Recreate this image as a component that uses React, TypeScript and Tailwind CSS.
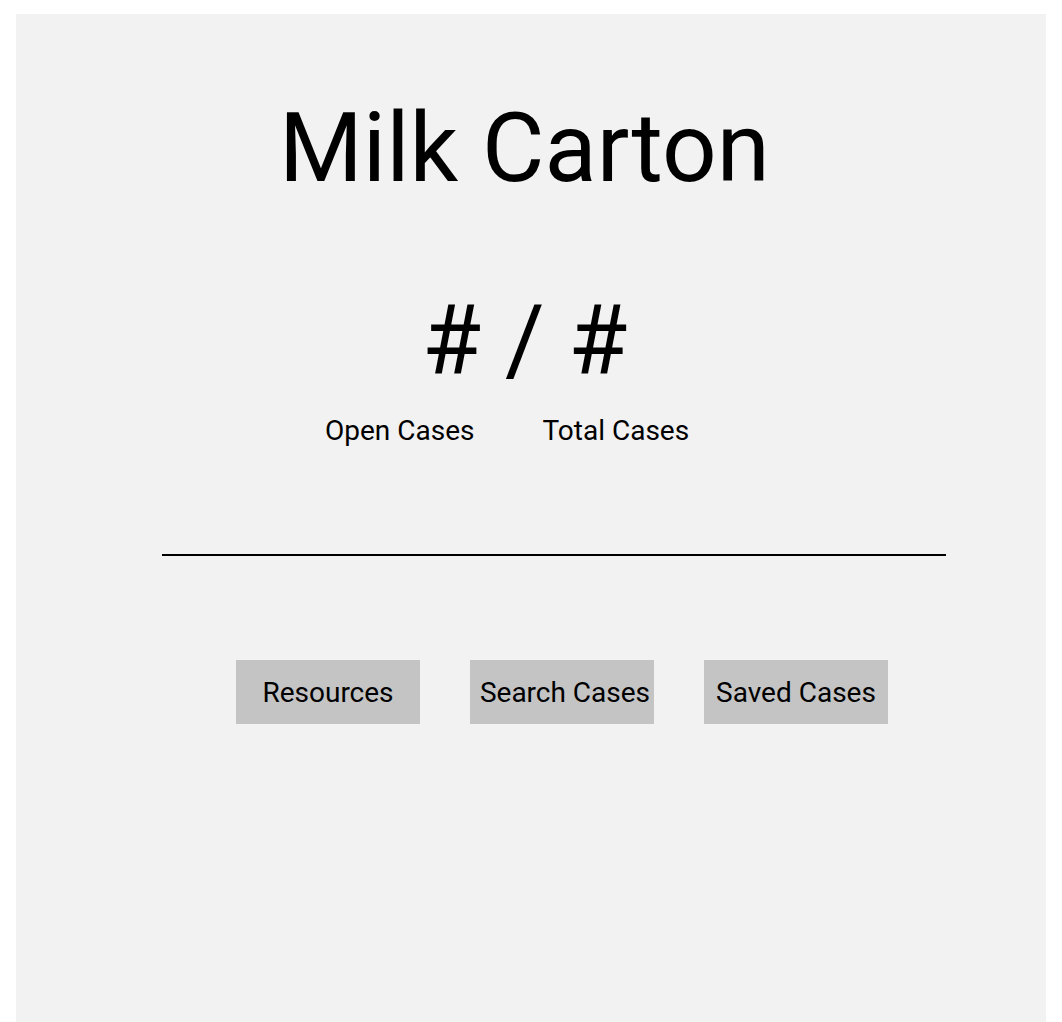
export default function App() {
  return (
    <div className="min-h-screen bg-white pt-[14px] pl-[16px] font-['Roboto',sans-serif] text-black">
      <div className="w-[1030px] h-[1008px] bg-[#f2f2f2] flex flex-col">
        {/* Title */}
        <h1 className="mt-[78px] pl-[263px] text-[96px] leading-[112px] font-normal">Milk Carton</h1>

        {/* Counts */}
        <div className="mt-[80px] pl-[406px] text-[96px] leading-[112px]"># / #</div>
        <div className="mt-[19px] pl-[309px] flex gap-[68px] text-[28px] leading-[32px]">
          <span>Open Cases</span>
          <span>Total Cases</span>
        </div>

        {/* Divider */}
        <div className="mt-[107px] ml-[146px] mr-[100px] h-[2px] bg-black" />

        {/* Nav buttons */}
        <div className="mt-[104px] pl-[220px] flex gap-[50px]">
          <button className="w-[184px] h-[64px] pt-[2px] bg-[#c4c4c4] text-[28px] whitespace-nowrap">Resources</button>
          <button className="w-[184px] h-[64px] pt-[2px] pl-[6px] bg-[#c4c4c4] text-[28px] whitespace-nowrap">Search Cases</button>
          <button className="w-[184px] h-[64px] pt-[2px] bg-[#c4c4c4] text-[28px] whitespace-nowrap">Saved Cases</button>
        </div>
      </div>
    </div>
  );
}
